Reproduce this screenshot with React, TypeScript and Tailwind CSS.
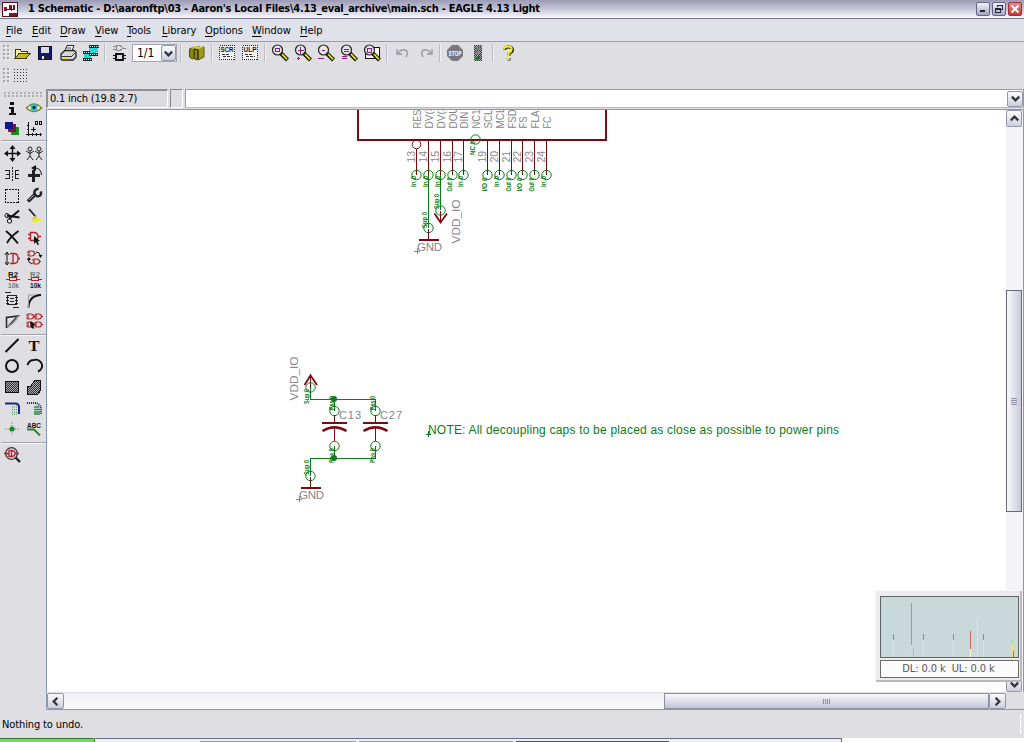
import React from 'react';

const Icon = ({ children, w = 'w-[23px]', crisp = true }: { children: React.ReactNode; w?: string; crisp?: boolean }) => (
  <span className={`flex shrink-0 items-center justify-center ${w}`}>
    <svg width="18" height="18" viewBox="0 0 18 18" fill="none" shapeRendering={crisp ? 'crispEdges' : 'auto'}>
      {children}
    </svg>
  </span>
);

const Cell = ({ children, crisp = false, h = 'h-[21px]' }: { children: React.ReactNode; crisp?: boolean; h?: string }) => (
  <div className={`flex w-[22px] items-start justify-center ${h}`}>
    <svg width="18" height="18" viewBox="0 0 18 18" fill="none" shapeRendering={crisp ? 'crispEdges' : 'auto'}>
      {children}
    </svg>
  </div>
);

const Sep = ({ w }: { w: string }) => (
  <span className={`flex h-[18px] shrink-0 justify-center ${w}`}>
    <span className="h-full w-px bg-[#bdbcc4]" />
    <span className="h-full w-px bg-[#f0f0f4]" />
  </span>
);

const Grip = ({ rows }: { rows: number }) => (
  <svg width="7" height="16" viewBox="0 0 7 16" className="ml-[3px] shrink-0" shapeRendering="crispEdges">
    {Array.from({ length: rows }).map((_, i) => (
      <g key={i}>
        <path d={`M0 ${i * 4}h2v2h-2zM4 ${i * 4}h2v2h-2z`} fill="#aaa8a4" />
        <path d={`M2 ${i * 4 + 2}h1v1h-1zM6 ${i * 4 + 2}h1v1h-1z`} fill="#fff" />
      </g>
    ))}
  </svg>
);

const Lens = ({ children }: { children?: React.ReactNode }) => (
  <>
    <circle cx="6.5" cy="6" r="5" stroke="#222" strokeWidth="1.2" fill="#e6e2ea" shapeRendering="auto" />
    <path d="M10 9.5l6.5 6.5" stroke="#111" strokeWidth="4" shapeRendering="auto" />
    <path d="M11 10.2l5 5.2" stroke="#e8e020" strokeWidth="1.8" shapeRendering="auto" />
    {children}
  </>
);

const Chevron = ({ d }: { d: string }) => (
  <svg width="9" height="9" viewBox="0 0 9 9" fill="none">
    <path d={d} stroke="#34343c" strokeWidth="2.3" />
  </svg>
);
const UP = 'M0.8 6.4L4.5 2.7L8.2 6.4';
const DOWN = 'M0.8 2.6L4.5 6.3L8.2 2.6';
const LEFT = 'M6.4 0.8L2.7 4.5L6.4 8.2';
const RIGHT = 'M2.6 0.8L6.3 4.5L2.6 8.2';

const ScrollButton = ({ d, className }: { d: string; className: string }) => (
  <button
    className={`flex shrink-0 items-center justify-center rounded-[2px] border border-[#9395ab] bg-gradient-to-b from-[#fbfbfd] to-[#cdcedc] ${className}`}
  >
    <Chevron d={d} />
  </button>
);

const menus: [string, string][] = [
  ['File', 'w-[26px]'],
  ['Edit', 'w-[28px]'],
  ['Draw', 'w-[35px]'],
  ['View', 'w-[32px]'],
  ['Tools', 'w-[35px]'],
  ['Library', 'w-[43px]'],
  ['Options', 'w-[47px]'],
  ['Window', 'w-[48px]'],
  ['Help', 'w-[30px]'],
];

const pins = [
  { x: 416.5, n: '13', name: 'RES', t: 'In 0', len: 19 },
  { x: 428.5, n: '14', name: 'DV(3', t: 'In 0', len: 23 },
  { x: 440.5, n: '15', name: 'DV(3', t: 'In 0', len: 23 },
  { x: 452.5, n: '16', name: 'DOU', t: 'Out 0', len: 22 },
  { x: 463.5, n: '17', name: 'DIN', t: 'In 0', len: 17 },
  { x: 487.5, n: '19', name: 'SCL', t: 'I/O 0', len: 19 },
  { x: 499.5, n: '20', name: 'MCL', t: 'In 0', len: 21 },
  { x: 511.5, n: '21', name: 'FSD', t: 'Out 0', len: 19 },
  { x: 522.5, n: '22', name: 'FS', t: 'I/O 0', len: 12 },
  { x: 534.5, n: '23', name: 'FLA', t: 'Out 0', len: 18 },
  { x: 546.5, n: '24', name: 'FC', t: 'In 0', len: 12 },
];

const VText = ({ x, y, s, size, fill, len, bold }: { x: number; y: number; s: string; size: number; fill: string; len?: number; bold?: boolean }) => (
  <text
    transform={`translate(${x} ${y}) rotate(-90)`}
    fontSize={size}
    fill={fill}
    fontWeight={bold ? 700 : 400}
    textLength={len}
    lengthAdjust="spacingAndGlyphs"
  >
    {s}
  </text>
);

const G = '#0b7d16';
const M = '#7a0a12';
const GR = '#85858a';

const Cap = ({ x, name }: { x: number; name: string }) => (
  <g>
    <path d={`M${x} 415V422M${x} 428V441`} stroke={M} />
    <path d={`M${x} 399V411M${x} 446V458`} stroke={G} />
    <path d={`M${x - 12.5} 423H${x + 12.5}`} stroke={M} strokeWidth="2" />
    <path d={`M${x - 12} 431Q${x} 423.5 ${x + 12} 431`} stroke={M} strokeWidth="2.4" shapeRendering="auto" />
    <circle cx={x} cy="411" r="4.7" stroke={G} shapeRendering="auto" />
    <circle cx={x} cy="446" r="4.7" stroke={G} shapeRendering="auto" />
    <VText x={x - 0.5} y={410} s="Pas 0" size={7} fill={G} len={14} bold />
    <VText x={x - 0.5} y={463} s="Pas 0" size={7} fill={G} len={15} bold />
    <text x={x + 4.5} y="419" fontSize="11" fill={GR} textLength="22">{name}</text>
  </g>
);

const Schematic = () => (
  <svg
    width="959"
    height="582"
    viewBox="47 110 959 582"
    fill="none"
    shapeRendering="crispEdges"
    className="block shrink-0 bg-white font-['Liberation_Sans',sans-serif]"
  >
    <path d="M358 110V140H606V110" stroke={M} strokeWidth="2" />
    {pins.map((p) => (
      <g key={p.n}>
        <path d={`M${p.x} ${p.n === '13' ? 149 : 141}V175`} stroke={M} />
        <circle cx={p.x} cy="175" r="4.7" stroke={G} shapeRendering="auto" />
        <VText x={p.x + 4} y={128.5} s={p.name} size={10.5} fill={GR} len={p.len} />
        <VText x={p.x - 1.5} y={162.5} s={p.n} size={10.5} fill={GR} />
        <VText x={p.x - 1} y={p.t === 'In 0' ? 187 : 191.5} s={p.t} size={7} fill={G} len={p.t === 'In 0' ? 11 : 14} bold />
      </g>
    ))}
    <circle cx="416.5" cy="144.5" r="4.3" stroke={M} shapeRendering="auto" />
    <VText x={480} y={128.5} s="NC1" size={10.5} fill={GR} len={19} />
    <circle cx="475.5" cy="139.5" r="4.7" stroke={G} shapeRendering="auto" />
    <VText x={474.5} y={155} s="NC 0" size={7} fill={G} len={14} bold />

    <path d="M428.5 175V228M440.5 175V210" stroke={G} />
    <circle cx="428.5" cy="228" r="4.7" stroke={G} shapeRendering="auto" />
    <circle cx="440.5" cy="210.5" r="4.7" stroke={G} shapeRendering="auto" />
    <path d="M428.5 229V241M440.5 211V222" stroke={M} />
    <path d="M419 240H439" stroke={M} strokeWidth="2" />
    <path d="M434.5 213.5L440.5 222.5L447 213.5" stroke={M} strokeWidth="1.8" shapeRendering="auto" />
    <VText x={427} y={228} s="Sup 0" size={7} fill={G} len={16} bold />
    <VText x={439} y={209} s="Sup 0" size={7} fill={G} len={15} bold />
    <text x="417" y="251" fontSize="11.5" fill={GR} textLength="25">GND</text>
    <path d="M414 251.5H420M417.5 248V254" stroke={GR} />
    <VText x={460} y={243.5} s="VDD_IO" size={11.5} fill={GR} len={44} />

    <VText x={298} y={400.5} s="VDD_IO" size={11.5} fill={GR} len={44} />
    <path d="M304.5 385L310.5 375.5L317 385" stroke={M} strokeWidth="1.8" shapeRendering="auto" />
    <path d="M310.5 376V388" stroke={M} />
    <circle cx="310.5" cy="387.5" r="4.7" stroke={G} shapeRendering="auto" />
    <path d="M310.5 388V399.5H375.5M310.5 476V458.5H375.5" stroke={G} />
    <VText x={308.5} y={404} s="Sup 0" size={7} fill={G} len={15} bold />
    <circle cx="334" cy="399" r="3" fill={G} shapeRendering="auto" />
    <circle cx="334" cy="458" r="3" fill={G} shapeRendering="auto" />
    <Cap x={334.5} name="C13" />
    <Cap x={375.5} name="C27" />
    <circle cx="310.5" cy="476" r="4.7" stroke={G} shapeRendering="auto" />
    <VText x={308.5} y={475} s="Sup 0" size={7} fill={G} len={15} bold />
    <path d="M310.5 477V488" stroke={M} />
    <path d="M301 488H321" stroke={M} strokeWidth="2" />
    <text x="299" y="499" fontSize="11.5" fill={GR} textLength="25">GND</text>
    <path d="M296 499.5H302M299.5 496V502" stroke={GR} />

    <path d="M426 434.5H431M428.5 431V437" stroke={G} />
    <text x="428" y="434" fontSize="12" fill={G} textLength="411">
      NOTE: All decoupling caps to be placed as close as possible to power pins
    </text>
  </svg>
);

const Rule = ({ h }: { h: string }) => (
  <div className={`flex w-[45px] flex-col justify-center ${h}`}>
    <div className="h-px bg-[#a3a2ac]" />
    <div className="h-px bg-[#f6f6f9]" />
  </div>
);

const Resistor = ({ a, b }: { a: string; b: string }) => (
  <g className="font-['Liberation_Sans',sans-serif]">
    <text x="5" y="6.5" fontSize="7.5" fontWeight="700" fill={a} textLength="10" lengthAdjust="spacingAndGlyphs">R2</text>
    <path d="M3 9.5h3M13 9.5h4M6 7.5h7v3h-7z" stroke="#b02028" shapeRendering="crispEdges" />
    <text x="5" y="17.5" fontSize="7" fontWeight="700" fill={b} textLength="11" lengthAdjust="spacingAndGlyphs">10k</text>
  </g>
);

const gate = (x: number, y: number) => `M${x} ${y}h2.5q3 0 3 2.5t-3 2.5h-2.5zM${x - 2} ${y + 1}h2M${x - 2} ${y + 4}h2M${x + 5.5} ${y + 2.5}h1.5`;

const Palette = () => (
  <div className="flex w-[46px] shrink-0 flex-col pl-px">
    <div className="flex h-[10px] items-center pl-[3px]">
      <svg width="39" height="5" shapeRendering="crispEdges">
        {Array.from({ length: 10 }).map((_, i) => (
          <path key={i} d={`M${i * 4} 0h2v2h-2zM${i * 4} 3h2v2h-2z`} fill="#b0aeaa" />
        ))}
      </svg>
    </div>
    <div className="flex flex-wrap">
      <Cell h="h-5" crisp><path d="M7 3h4v3h-4zM6 8h5v6h2v2h-7v-2h2v-4h-2z" fill="#111" /></Cell>
      <Cell h="h-5">
        <path d="M1.5 9Q9 1 16.5 9Q9 16 1.5 9z" fill="#fff" stroke="#8c8420" strokeWidth="1.6" />
        <circle cx="9" cy="8.5" r="3.6" fill="#28c0d0" /><circle cx="9" cy="8.5" r="1.6" fill="#111" />
      </Cell>
      <Cell h="h-5" crisp>
        <path d="M8 8h8v8h-8z" fill="#178a28" /><path d="M5 5h8v8h-8z" fill="#8a1024" /><path d="M2 3h8v7h-8z" fill="#14148c" />
      </Cell>
      <Cell h="h-5" crisp>
        <path d="M3.5 3V17M1 15.5H17M2 6.5h2M2 10.5h2M7.5 14v3M11.500 14v3M15.500 14v3M6 10.500h5M8.500 8v5" stroke="#111" />
        <path d="M10.500 2.500h2v3h-2zM14.500 2.500h2v3h-2z" stroke="#111" />
      </Cell>
    </div>
    <Rule h="h-[4px]" />
    <div className="flex flex-wrap pt-px">
      <Cell><path d="M9.5 3v13M3 9.5h13" stroke="#111" strokeWidth="1.4" /><path d="M9.5 1l3 4h-6zM9.5 18l3-4h-6zM1 9.5l4-3v6zM18 9.5l-4-3v6z" fill="#111" /></Cell>
      <Cell>
        {[5, 14].map((x) => (
          <g key={x} stroke="#222"><circle cx={x} cy="5" r="2" /><path d={`M${x} 7v5M${x - 4} 7l4 2.5l4-2.5M${x} 12l-3 4M${x} 12l3 4`} /></g>
        ))}
      </Cell>
      <Cell crisp><path d="M2 5.5h4.5v8H2M3 9.5h3M16 5.5h-4v8h4M12 9.5h4" stroke="#222" /><path d="M9.5 2v15" stroke="#222" strokeDasharray="2 1" /></Cell>
      <Cell><path d="M3 10.5h12" stroke="#222" strokeWidth="3" /><path d="M8.5 5v12" stroke="#222" strokeWidth="3" /><path d="M10 3q6 0 6.5 7" stroke="#111" /><path d="M6 3l5-3v6z" fill="#111" /></Cell>
      <Cell crisp><path d="M2.5 3.5h13v13h-13z" stroke="#111" strokeDasharray="2 1" /></Cell>
      <Cell><path d="M3 15.5l7.5-7.5" stroke="#222" strokeWidth="3.5" /><path d="M15.5 5.5a3 3 0 0 1-5 3.5a3.5 3.5 0 0 1 3-6" stroke="#222" strokeWidth="2.4" /><path d="M4 14l5-5" stroke="#aaa" /></Cell>
      <Cell><path d="M16 3.5L6 12M16.5 10.5L4 8.5" stroke="#111" strokeWidth="2" /><circle cx="4" cy="8.500" r="2" stroke="#111" /><circle cx="6.5" cy="14" r="2.2" stroke="#111" /></Cell>
      <Cell><path d="M4 2l6 7" stroke="#222" strokeWidth="1.8" /><path d="M10 9l7 5h-4l-5 2l-1-3z" fill="#f0e820" /><path d="M8 12l4-3.5" stroke="#888" /></Cell>
      <Cell><path d="M3 3Q8 7 15 15.5M15.5 3Q7 9 4 15" stroke="#111" strokeWidth="1.9" /></Cell>
      <Cell><path d="M5.500 4.500h3q4.500 0 4.500 4t-4.500 4h-3zM3 6.500h2.500M3 10.500h2.500M13 8.500h3" stroke="#b02028" strokeWidth="1.3" /><path d="M9 8l6 5l-2.5.5l1.5 3l-1.5.5l-1.5-3l-2 2z" fill="#111" /></Cell>
      <Cell><path d="M4 4v11M2 6l2-3l2 3M2 13l2 3l2-3" stroke="#111" /><path d="M7 4.5h4M7 14.5h4M10 4.5v10M10 4.5h1q4 0 4 5t-4 5M15 9.500h2" stroke="#b02028" strokeWidth="1.3" /></Cell>
      <Cell><path d={gate(4, 2)} stroke="#b02028" strokeWidth="1.2" /><path d={gate(9, 10)} stroke="#b02028" strokeWidth="1.2" /><path d="M11 3q4 0 4.5 4M3 9q0 5 4 6" stroke="#111" /><path d="M13.5 6h4l-2 3zM2 11l2-3l2 3z" fill="#111" /></Cell>
      <Cell><Resistor a="#111" b="#777" /></Cell>
      <Cell><Resistor a="#777" b="#111" /></Cell>
      <Cell crisp><path d="M4.5 4.5h9v9h-9z" stroke="#222" /><path d="M3 6h3M3 9.5h3M3 12h3M12 6h3M12 9.5h3M12 12h3M7 7.5h4M7 10.5h4M10 16.5h6M2 1.5h6" stroke="#222" /></Cell>
      <Cell><path d="M3.500 16.500Q4 4.500 16 4" stroke="#111" strokeWidth="1.800" /><path d="M3.5 16V4H9" stroke="#999" /></Cell>
      <Cell><path d="M3.5 16V5.5L15 4L4 15.5" stroke="#222" strokeWidth="1.5" /><path d="M4 15Q12 11 15 4" stroke="#999" strokeWidth="1.5" /></Cell>
      <Cell>
        <path d={gate(3, 2) + gate(11, 2) + gate(3, 10) + gate(11, 10)} stroke="#b02028" strokeWidth="1.2" />
        <path d="M5 9l6 4l-3 .5l1.500 3h-2l-2-2z" fill="#111" />
      </Cell>
    </div>
    <Rule h="h-[3px]" />
    <div className="flex flex-wrap">
      <Cell><path d="M2.5 16L15.5 3" stroke="#111" strokeWidth="1.9" /></Cell>
      <Cell><text x="3.5" y="15" fontSize="15" fill="#111" fontWeight="700" textLength="11" lengthAdjust="spacingAndGlyphs" className="font-['Liberation_Serif',serif]">T</text></Cell>
      <Cell><circle cx="9" cy="9" r="6" stroke="#111" strokeWidth="2" /></Cell>
      <Cell><path d="M2.500 8Q4 3 9 3A6 6 0 0 1 13 14.500" stroke="#111" strokeWidth="1.900" /></Cell>
      <Cell crisp><path d="M2.5 3.5h13v11h-13z" stroke="#111" fill="url(#hatch)" /></Cell>
      <Cell crisp><path d="M2.500 16.500v-8h3l4-6h6v10l-3 4z" stroke="#111" fill="url(#hatch)" /></Cell>
      <Cell><path d="M2 4.5h10q4 0 4 4V15" stroke="#1c2488" strokeWidth="2" /><path d="M9 8h5M9 10.500h5M9 13h5M9 15h5" stroke="#25903a" strokeDasharray="1 1" /></Cell>
      <Cell><path d="M2 4h10l4 4V15" stroke="#1c2488" strokeWidth="2" strokeDasharray="1 1" /><path d="M9 8h5M9 10.5h6M9 13h6M9 15h6" stroke="#25903a" strokeWidth="1.300" /></Cell>
      <Cell><path d="M9 2.500v13M2 9h14" stroke="#25903a" strokeDasharray="1 1.500" /><circle cx="9" cy="9" r="2.600" fill="#178a28" /></Cell>
      <Cell><text x="2" y="7.500" fontSize="7.500" fontWeight="700" fill="#111" textLength="14" lengthAdjust="spacingAndGlyphs" className="font-['Liberation_Sans',sans-serif]">ABC</text><path d="M2 9.500h7l6 6" stroke="#25803a" strokeWidth="1.800" /></Cell>
    </div>
    <Rule h="h-[4px]" />
    <Cell><circle cx="8.500" cy="8.500" r="5.800" stroke="#333" strokeWidth="1.300" /><path d="M6 5.500h2q4 0 4 3t-4 3h-2zM1 8.500h5M12 8.500h4M8.500 5.500v6" stroke="#b02028" strokeWidth="1.300" /><path d="M12.500 12.500l4.500 4.500" stroke="#222" strokeWidth="2.400" /></Cell>
  </div>
);

const Script = ({ s }: { s: string }) => (
  <Icon>
    <path d="M1.5 1.500h15v14h-15z" fill="#f4f4f6" stroke="#222" strokeDasharray="1 1" />
    <text x="2.500" y="8" fontSize="7.500" fontWeight="700" fill="#111" textLength="13" lengthAdjust="spacingAndGlyphs" className="font-['Liberation_Sans',sans-serif]">{s}</text>
    <path d="M4 10.500h8M5 12.500h9" stroke="#333" strokeDasharray="3 1" />
  </Icon>
);

const Toolbar = () => (
  <div className="h-[47px] shrink-0">
    <div className="flex h-[22px] items-center">
      <Grip rows={4} />
      <Icon>
        <path d="M2 14V5h5l1 2h6v3" stroke="#3a3a08" fill="#f6f29a" /><path d="M2 14.5l4-5h11l-4 5z" fill="#c8b820" stroke="#3a3a08" />
      </Icon>
      <Icon><path d="M2.5 2.500h13v13h-13z" fill="#12128c" stroke="#111" /><path d="M5 3h8v6h-8z" fill="#dcdce4" /><path d="M5 11h8v5h-8z" fill="#222" /><path d="M6 12h2v3h-2z" fill="#eee" /></Icon>
      <Icon crisp={false}><path d="M6 7l2-5.500h7L13 7" fill="#fff" stroke="#222" /><path d="M2 10l4-3.500h9l2 1.500v5l-3 3H3l-1-1z" fill="#d8d8d8" stroke="#222" strokeWidth="1.300" /><path d="M3 12.500h10M13 12l3-3M8 4h4" stroke="#333" /><path d="M5 14.500h3" stroke="#e8e020" /></Icon>
      <Icon>
        <path d="M7 3h9v5h-2v4h-5v3h-7v-6h5z" fill="#20d8e0" /><path d="M7 1h10v3h-10zM1 7h7v3h-7zM7 9h9v3h-9zM1 14h9v3h-9z" fill="#182828" /><path d="M8 2.500h9M2 8.500h6M8 10.500h8M2 15.500h8" stroke="#d8f8f8" strokeDasharray="1 1" />
      </Icon>
      <Sep w="w-[5px]" />
      <Icon><path d="M6 1.500h4l3 2.500l-3 2.500h-4zM3 2.500h3M3 5.500h3M13 4h3" stroke="#888" /><path d="M6 10h7v6h-7zM3 11.500h3M3 14.500h3M13 11.500h3M13 14.500h3" stroke="#111" strokeWidth="1.500" /></Icon>
      <div className="ml-0.5 flex h-[18px] w-[45px] shrink-0 items-center justify-between border border-[#a3a5b4] bg-white pl-1 text-[12px]">
        <span>1/1</span>
        <ScrollButton d={DOWN} className="h-4 w-[15px]" />
      </div>
      <Sep w="w-[8px]" />
      <Icon crisp={false}><path d="M1.500 5l5-2v11l-2 1l-3-2zM6 5l5-3v12l-3 2l-2-2z" fill="#8c8410" stroke="#4c4808" /><path d="M10 4l6-1v10l-6 3z" fill="#a09818" stroke="#5c5808" /><path d="M3 4.500l4-2.500l9 1l-5 2z" fill="#d0c840" /><path d="M6 5l4 1v10" stroke="#222" /></Icon>
      <Sep w="w-[7px]" />
      <Script s="SCR" />
      <Script s="ULP" />
      <Sep w="w-[7px]" />
      <Icon><Lens><path d="M4.500 4.500h4v3h-4z" stroke="#802080" /></Lens></Icon>
      <Icon><Lens><path d="M6.500 3v6.500M3.500 6.500h6.500M3 14.500h3M4.500 13v3" stroke="#902070" /></Lens></Icon>
      <Icon><Lens><path d="M5 6.500h3M1 14.500h6" stroke="#802080" /></Lens></Icon>
      <Icon><Lens><path d="M4 5.500h5M4 7.500h5M2 12.500h5M2 14.500h5" stroke="#802080" /></Lens></Icon>
      <Icon><path d="M2.500 3.500h14v11h-14z" stroke="#111" fill="#fff" /><Lens><path d="M4.500 4.500h4v4h-4z" stroke="#802080" /></Lens></Icon>
      <Sep w="w-[8px]" />
      <Icon crisp={false}><path d="M3 5v5h5M4 9q3-4 7-3t1 7" stroke="#96969c" strokeWidth="1.300" /></Icon>
      <Icon crisp={false}><path d="M15 5v5h-5M14 9q-3-4-7-3t-1 7" stroke="#96969c" strokeWidth="1.300" /></Icon>
      <Sep w="w-[6px]" />
      <Icon crisp={false}>
        <path d="M6 1h6l5 5v6l-5 5H6l-5-5V6z" fill="#77777c" />
        <text x="2.500" y="11.500" fontSize="7" fontWeight="700" fill="#fff" textLength="13" lengthAdjust="spacingAndGlyphs" className="font-['Liberation_Sans',sans-serif]">STOP</text>
      </Icon>
      <Icon><path d="M5 1h8v16h-8z" fill="url(#hatch)" /><circle cx="9" cy="4" r="2" fill="#777" /><circle cx="9" cy="9" r="2" fill="#888" /><circle cx="9" cy="14" r="2" fill="#1c7028" /></Icon>
      <Sep w="w-[7px]" />
      <Icon crisp={false}>
        <path d="M5.500 6q0-3 4-3t4 3q0 2-3.500 3.500V12M10 14v2.500" stroke="#222" strokeWidth="3" />
        <path d="M5 5.500q0-3 4-3t3.500 3q0 2-3 3.500V12M9.500 14v2" stroke="#f4f010" strokeWidth="2.200" />
      </Icon>
    </div>
    <div className="flex h-6 items-center">
      <Grip rows={4} />
      <svg width="14" height="14" className="ml-1" shapeRendering="crispEdges">
        {[0, 3, 6, 9, 12].map((y) => (
          <path key={y} d={`M0 ${y + 0.5}h14`} stroke="#333" strokeDasharray="1 2" />
        ))}
      </svg>
    </div>
  </div>
);

const bars = [
  { x: 13, top: 37, mid: 43, r: '#d0706c', y: '#e6ee84' },
  { x: 31, top: 6, mid: 48, r: '#ef7c7c', y: '#dce87c' },
  { x: 43, top: 37, mid: 43, r: '#d0706c', y: '#e6ee84' },
  { x: 73, top: 37, mid: 43, r: '#d0706c', y: '#e6ee84' },
  { x: 90, top: 34, mid: 52, r: '#d86464', y: '#fbfbe0' },
  { x: 97, top: 19, mid: 20, r: '#a8dc84', y: '#eef080' },
  { x: 103, top: 37, mid: 43, r: '#d0706c', y: '#e6ee84' },
  { x: 132, top: 44, mid: 46, r: '#80d880', y: '#f0e870' },
];

const TrafficMeter = () => (
  <div className="absolute right-[2px] bottom-[60px] flex h-[91px] w-[146px] flex-col gap-[2px] border-r-2 border-b-2 border-[#b9b9bc] bg-[#ebebec]/95 pt-[5px] pl-1 shadow-[-1px_-1px_0_#f7f7f7]">
    <svg width="139" height="62" shapeRendering="crispEdges" className="border border-[#5d6464] bg-[#c9d8d9]">
      {bars.map((b) => (
        <g key={b.x}>
          <path d={`M${b.x - 0.5} ${b.top}V${b.mid}`} stroke={b.r} />
          <path d={`M${b.x - 0.5} ${b.mid}V60`} stroke={b.y} />
        </g>
      ))}
      <path d="M32.5 51V60" stroke="#70e880" /><path d="M132.5 54V60" stroke="#e86030" />
    </svg>
    <div className="flex h-[18px] w-[139px] items-center justify-center border border-[#6a6a6a] bg-[#fbfbfb] pr-0.5 text-[11px] tracking-[-0.1px] whitespace-pre text-[#55555a]">
      DL: 0.0 k  UL: 0.0 k
    </div>
  </div>
);

export default function App() {
  return (
    <div className="relative flex h-[742px] w-[1024px] flex-col overflow-hidden bg-[#dfdee3] font-['DejaVu_Sans_Condensed','DejaVu_Sans',sans-serif] text-[11px] text-black [font-stretch:condensed]">
      <svg width="0" height="0" className="absolute">
        <defs>
          <pattern id="hatch" width="2" height="2" patternUnits="userSpaceOnUse">
            <rect width="2" height="2" fill="#aaaab0" /><path d="M0 0h1v1h-1zM1 1h1v1h-1z" fill="#333" />
          </pattern>
        </defs>
      </svg>

      <div className="flex h-[19px] shrink-0 items-center border-b border-[#77768e] bg-gradient-to-b from-[#9c9bb5] via-[#c6c5d7] to-[#fafafd] pr-[2px] pl-[2px]">
        <svg width="16" height="15" shapeRendering="crispEdges">
          <path d="M.5.5h15v14h-15z" fill="#fff" stroke="#54101c" />
          <path d="M2 5h3v4h-3zM7 3h2v5h-2zM11 3h2v5h-2z" fill="#8c1028" /><path d="M4 7.5h9M9.5 3v6" stroke="#501020" /><path d="M7 11h8v3h-8z" fill="#8c1028" />
        </svg>
        <span className="mt-px ml-[10px] w-[514px] text-[11px] font-bold tracking-[-0.27px] whitespace-nowrap">
          1 Schematic - D:\aaronftp\03 - Aaron's Local Files\4.13_eval_archive\main.sch - EAGLE 4.13 Light
        </span>
        <div className="ml-auto flex gap-[2px]">
          {[0, 1, 2].map((i) => (
            <button
              key={i}
              className={`flex h-[14px] w-[14px] items-center justify-center rounded-[2px] border ${i === 2 ? 'border-[#a03038] bg-gradient-to-b from-[#e88888] to-[#c83038]' : 'border-[#66668a] bg-gradient-to-b from-[#f4f4fa] to-[#a4a4be]'}`}
            >
              <svg width="10" height="10" fill="none" shapeRendering={i === 2 ? 'auto' : 'crispEdges'}>
                {i === 0 && <path d="M2 7h5" stroke="#22223a" strokeWidth="2" />}
                {i === 1 && <path d="M3.5 3V1.5h5v4h-2M1.5 4.5h5v4h-5zM1.5 5h5" stroke="#22223a" />}
                {i === 2 && <path d="M1.5 1.5l7 7M8.5 1.5l-7 7" stroke="#fff" strokeWidth="2" />}
              </svg>
            </button>
          ))}
        </div>
      </div>

      <div className="flex h-[23px] shrink-0 items-center border-b border-[#9c9ca8] bg-[#dfe1eb] pt-0.5 pl-[6px] text-[11px] tracking-[-0.05px]">
        {menus.map(([m, w]) => (
          <span key={m} className={`shrink-0 whitespace-nowrap ${w}`}>
            <span className="underline underline-offset-2">{m[0]}</span>{m.slice(1)}
          </span>
        ))}
      </div>

      <Toolbar />

      <div className="flex h-[621px] shrink-0">
        <Palette />
        <div className="flex min-w-0 flex-1 flex-col">
          <div className="flex h-[20px] shrink-0 gap-[2px] pb-px">
            <div className="flex w-[122px] items-center border-t-2 border-r border-b border-l-2 border-t-[#908f95] border-r-white border-b-white border-l-[#908f95] bg-[#dcdbdf] pl-[2px] text-[11px] tracking-[-0.22px]">
              0.1 inch (19.8 2.7)
            </div>
            <div className="w-[13px] border-t border-r border-b border-l border-t-[#88878d] border-r-white border-b-white border-l-[#88878d]" />
            <div className="flex flex-1 items-center justify-end border border-[#9c9ca8] border-b-[#b8bcc8] bg-white">
              <ScrollButton d={DOWN} className="h-4 w-[16px]" />
            </div>
          </div>
          <div className="flex flex-1 flex-col border-t border-b border-l border-[#7f9db9]">
            <div className="flex h-[582px]">
              <Schematic />
              <div className="flex flex-1 flex-col border-r border-[#8a96ac] bg-[#f3f3f8]">
                <ScrollButton d={UP} className="h-[17px] w-4" />
                <div className="h-[163px]" />
                <div className="flex h-[222px] w-4 flex-col items-center justify-center gap-px border border-[#686878] bg-gradient-to-r from-[#fafafc] to-[#c8cad9]">
                  {[0, 1, 2, 3].map((i) => <span key={i} className="h-px w-1.5 bg-[#8d8fa2]" />)}
                </div>
                <ScrollButton d={DOWN} className="mt-auto h-[16px] w-4" />
              </div>
            </div>
            <div className="flex flex-1">
              <div className="flex w-[959px] border-t border-[#dedee4] bg-gradient-to-b from-[#eeeef5] to-[#fbfbfd]">
                <ScrollButton d={LEFT} className="h-[16px] w-[17px]" />
                <div className="w-[600px] shrink-0" />
                <div className="flex h-[16px] flex-1 items-center justify-center gap-px border border-[#8c8ea2] bg-gradient-to-b from-[#f8f8fb] to-[#c3c5d6]">
                  {[0, 1, 2, 3].map((i) => <span key={i} className="h-[5px] w-px bg-[#8d8fa2]" />)}
                </div>
                <ScrollButton d={RIGHT} className="h-[16px] w-[17px]" />
              </div>
            </div>
          </div>
        </div>
      </div>

      <div className="flex h-[28px] shrink-0 items-center justify-between pr-[3px] pl-[2px] text-[11px] tracking-[-0.12px]">
        <span className="pt-[3px]">Nothing to undo.</span>
        <span className="h-5 w-px bg-white" />
      </div>
      <div className="flex h-[4px] shrink-0 bg-white">
        <div className="w-[95px] rounded-tr-[2px] border-t border-r border-[#2c7a2c] bg-[#7ad85c]" />
        <div className="flex w-[747px] items-end border-t border-r border-[#6c6c84] bg-[#eeeef6]">
          <div className="ml-[105px] h-px w-[156px] bg-[#9c9cac]" />
          <div className="ml-[3px] h-px w-[154px] bg-[#9c9cac]" />
          <div className="ml-[3px] h-px w-[153px] bg-[#55556a]" />
        </div>
      </div>

      <TrafficMeter />
    </div>
  );
}
